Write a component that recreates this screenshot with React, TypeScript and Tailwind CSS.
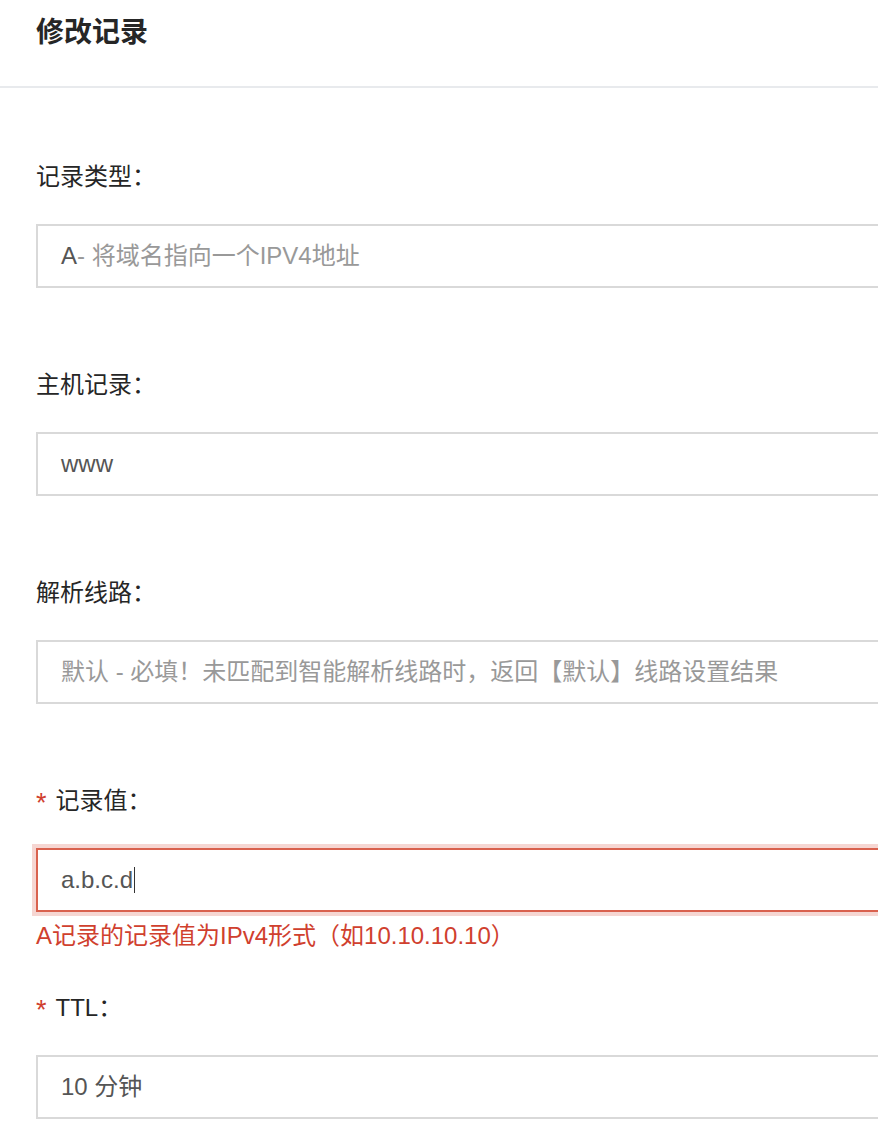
import type { ReactNode } from 'react';

const font = 'font-["Liberation_Sans","Noto_Sans_CJK_SC",sans-serif]';

function Star() {
  return <span className="mr-[9px] text-[27px] leading-[28px] pt-[4px] text-[#d0402e]">*</span>;
}

function FieldLabel({ children, required, first }: { children: ReactNode; required?: boolean; first?: boolean }) {
  return (
    <div
      className={`${first ? 'mt-[75px]' : 'mt-[83px]'} flex items-center h-[28px] text-[24px] leading-[28px] text-[#262626]`}
    >
      {required && <Star />}
      <span>{children}</span>
    </div>
  );
}

function Box({ children, error }: { children: ReactNode; error?: boolean }) {
  return (
    <div
      className={`mt-[33px] h-[64px] flex items-center pl-[23px] text-[24px] leading-[28px] border-2 bg-white ${
        error ? 'border-[#d9614e] shadow-[0_0_0_4px_#f6d6d2]' : 'border-[#d9d9d9]'
      }`}
    >
      {children}
    </div>
  );
}

export default function App() {
  return (
    <div className={`w-[878px] min-h-[1146px] bg-white overflow-hidden ${font}`}>
      <div className="h-[88px] border-b-2 border-[#e8eaed] px-9 pt-[18px]">
        <h1 className="text-[28px] leading-[30px] font-bold text-[#262626]">修改记录</h1>
      </div>

      <div className="pl-9 mr-[-24px]">
        <FieldLabel first>记录类型：</FieldLabel>
        <Box>
          <span className="text-[#555]">A</span>
          <span className="text-[#999]">- 将域名指向一个IPV4地址</span>
        </Box>

        <FieldLabel>主机记录：</FieldLabel>
        <Box>
          <span className="text-[#555]">www</span>
        </Box>

        <FieldLabel>解析线路：</FieldLabel>
        <Box>
          <span className="text-[#999]">默认 - 必填！未匹配到智能解析线路时，返回【默认】线路设置结果</span>
        </Box>

        <FieldLabel required>记录值：</FieldLabel>
        <Box error>
          <span className="text-[#555]">a.b.c.d</span>
          <span className="ml-[1px] inline-block w-[1px] h-[26px] bg-[#333]" />
        </Box>
        <p className="mt-[10px] text-[24px] leading-[28px] text-[#d0402e]">
          A记录的记录值为IPv4形式（如10.10.10.10）
        </p>

        <div className="mt-[44px] flex items-center h-[28px] text-[24px] leading-[28px] text-[#262626]">
          <Star />
          <span>TTL：</span>
        </div>
        <Box>
          <span className="text-[#555]">10 分钟</span>
        </Box>
      </div>
    </div>
  );
}
